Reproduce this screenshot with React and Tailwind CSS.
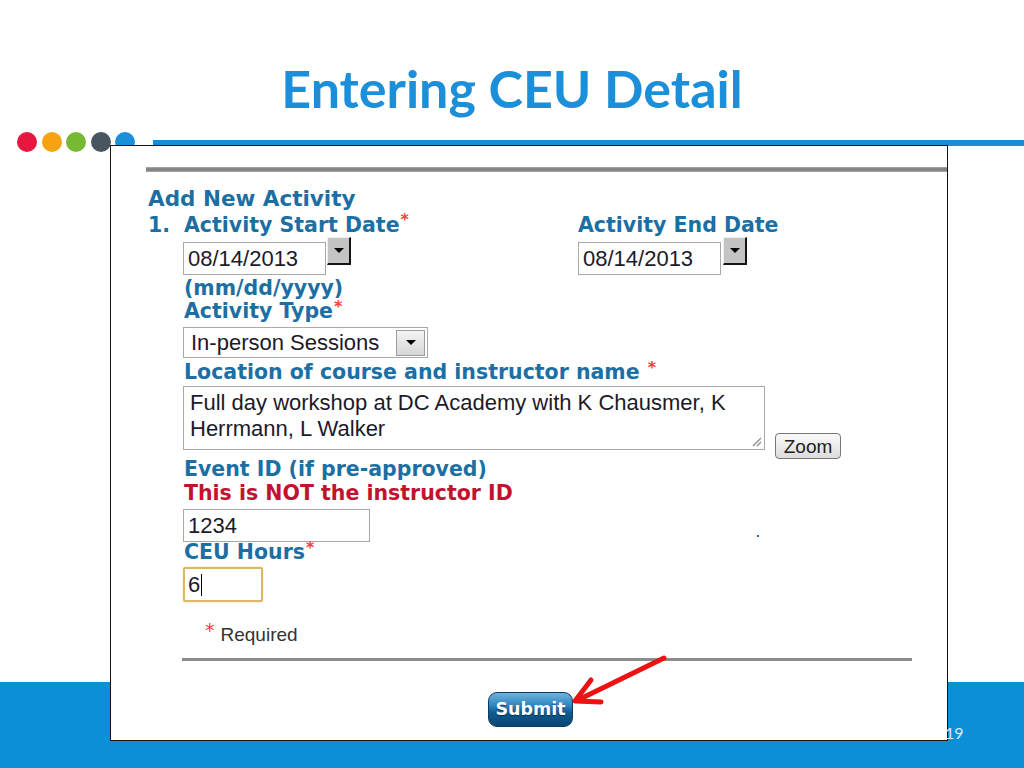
import React from "react";

const Star = () => (
  <span className="relative top-[-2px] ml-[1px] align-top text-[16px] leading-none text-[#ff3b3b]">*</span>
);

const Label = ({ children, req, className = "" }) => (
  <div className={`font-['DejaVu_Sans',Verdana,sans-serif] font-bold text-[20.5px] leading-[21px] text-[#1d6fa3] whitespace-nowrap ${className}`}>
    {children}
    {req && <Star />}
  </div>
);

const DateButton = () => (
  <div className="flex h-[28px] w-[24px] justify-center border-l border-t border-l-[#eeeeee] border-t-[#eeeeee] border-r-2 border-b-2 border-r-[#151515] border-b-[#151515] bg-[#c4c4c4] pt-[10px]">
    <svg width="10" height="5" viewBox="0 0 10 5">
      <path d="M0 0H10L5 5Z" fill="#000" />
    </svg>
  </div>
);

const TextBox = ({ children, className = "" }) => (
  <div className={`flex items-center border border-[#a8a8a8] pl-[4px] font-['Liberation_Sans',Arial,sans-serif] text-[22px] leading-none text-[#1c1a2a] ${className}`}>
    {children}
  </div>
);

export default function App() {
  return (
    <div className="relative h-[768px] w-[1024px] overflow-hidden bg-[linear-gradient(to_bottom,#ffffff_682px,#0b8fd7_682px)] font-['Lato',sans-serif]">
      {/* Title */}
      <div className="h-[132px] pt-[62px] text-center">
        <h1 className="text-[52px] font-bold leading-[52px] text-[#1b8fd9]">Entering CEU Detail</h1>
      </div>

      {/* Dots and rule */}
      <div className="flex h-[20px] items-start">
        <div className="ml-[17px] flex gap-[4.5px]">
          <div className="h-5 w-5 rounded-full bg-[#e8173f]" />
          <div className="h-5 w-5 rounded-full bg-[#f5a312]" />
          <div className="h-5 w-5 rounded-full bg-[#78b933]" />
          <div className="h-5 w-5 rounded-full bg-[#465560]" />
          <div className="h-5 w-5 rounded-full bg-[#1b8fd9]" />
        </div>
        <div className="ml-[18px] mt-[8px] h-[6px] flex-1 bg-[#1b8bd3]" />
      </div>

      {/* Screenshot box */}
      <div className="relative z-10 ml-[110px] mt-[-7px] h-[596px] w-[838px] border border-[#161616] bg-white">
        <div className="ml-[35px] mt-[21px] h-[5px] bg-[linear-gradient(to_bottom,#b0b0b0,#858585_30%,#858585_70%,#b0b0b0)]" />

        <div className="ml-[37px]">
          <div className="mt-[15px] font-['DejaVu_Sans',Verdana,sans-serif] text-[21.5px] font-bold leading-[24px] text-[#1d6fa3]">
            Add New Activity
          </div>

          <div className="mt-[3px] flex">
            <div className="w-[36px] font-['DejaVu_Sans',Verdana,sans-serif] text-[20.5px] font-bold leading-[23px] text-[#1d6fa3]">1.</div>

            <div className="flex flex-col">
              {/* Dates */}
              <div className="flex">
                <div className="w-[394px]">
                  <Label className="leading-[23px]" req>Activity Start Date</Label>
                  <div className="-ml-[1px] flex items-start">
                    <TextBox className="mt-[5px] h-[33px] w-[143px]">08/14/2013</TextBox>
                    <div className="ml-[1px]"><DateButton /></div>
                  </div>
                </div>
                <div>
                  <Label className="leading-[23px]">Activity End Date</Label>
                  <div className="flex items-start">
                    <TextBox className="mt-[5px] h-[33px] w-[143px]">08/14/2013</TextBox>
                    <div className="ml-[2px]"><DateButton /></div>
                  </div>
                </div>
              </div>

              <Label className="mt-[3px]">(mm/dd/yyyy)</Label>
              <Label className="mt-[2px]" req>Activity Type</Label>

              {/* Select */}
              <div className="-ml-[1px] mt-[5px] flex h-[31px] w-[245px] items-center border border-[#a8a8a8] pl-[7px] pr-[2px] font-['Liberation_Sans',Arial,sans-serif] text-[22px] leading-none text-[#1c1a2a]">
                <span className="flex-1">In-person Sessions</span>
                <div className="flex h-[26px] w-[29px] items-center justify-center border border-[#9c9c9c] bg-[linear-gradient(to_bottom,#f4f4f4,#d6d6d6)]">
                  <svg width="10" height="5" viewBox="0 0 10 5">
                    <path d="M0 0H10L5 5Z" fill="#000" />
                  </svg>
                </div>
              </div>

              <Label className="mt-[4px]">
                Location of course and instructor name <Star />
              </Label>

              {/* Textarea + Zoom */}
              <div className="-ml-[1px] mt-[3px] flex items-end">
                <div className="relative h-[64px] w-[582px] border border-[#a8a8a8] pl-[6px] pt-[3px] font-['Liberation_Sans',Arial,sans-serif] text-[22px] leading-[26px] text-[#1c1a2a]">
                  <div>Full day workshop at DC Academy with K Chausmer, K</div>
                  <div>Herrmann, L Walker</div>
                  <svg className="absolute bottom-[2px] right-[2px]" width="11" height="11" viewBox="0 0 11 11">
                    <path d="M2 10L10 2M6 10L10 6" stroke="#8a8a8a" strokeWidth="1.2" />
                  </svg>
                </div>
                <div className="-mb-[9px] ml-[10px] flex h-[26px] w-[66px] items-center justify-center rounded-[4px] border border-[#777] bg-[linear-gradient(to_bottom,#fafafa,#dcdcdc)] font-['Liberation_Sans',Arial,sans-serif] text-[19px] leading-none text-[#222]">
                  Zoom
                </div>
              </div>

              <Label className="mt-[9px]">Event ID (if pre-approved)</Label>
              <Label className="mt-[3px] text-[#c3122f]">This is NOT the instructor ID</Label>

              <TextBox className="-ml-[1px] mt-[5px] h-[33px] w-[187px]">1234</TextBox>

              <Label req>CEU Hours</Label>

              <div className="-ml-[1px] mt-[4px] flex h-[35px] w-[80px] items-center rounded-[2px] border-2 border-[#dcb56e] pl-[3px] font-['Liberation_Sans',Arial,sans-serif] text-[22px] leading-none text-[#1c1a2a] shadow-[0_0_2px_#f0d8a0]">
                6<span className="ml-[1px] inline-block h-[22px] w-[1px] bg-black" />
              </div>

              <div className="ml-[21px] mt-[22px] flex font-['Liberation_Sans',Arial,sans-serif] text-[19px] leading-[22px] text-[#333]">
                <span className="relative top-[-3px] mr-[6px] font-['DejaVu_Sans',sans-serif] text-[19px] leading-none text-[#ff3b3b]">*</span>
                Required
              </div>

              <div className="-ml-[2px] mt-[12px] h-[3px] w-[730px] bg-[#8c8c8c]" />

              <div className="ml-[304px] mt-[31px] flex h-[35px] w-[85px] items-center justify-center rounded-[9px] border border-[#0b3d63] bg-[linear-gradient(to_bottom,#6fb3de,#2a82bd_40%,#0f5a8e_60%,#0b4672)] font-['DejaVu_Sans',Verdana,sans-serif] text-[17.5px] font-bold leading-none text-white [text-shadow:0_1px_1px_#06304f]">
                Submit
              </div>
            </div>
          </div>
        </div>

        <div className="absolute left-[646px] top-[389px] h-[2px] w-[2px] bg-[#3060a0]" />
      </div>

      {/* Red arrow */}
      <svg className="absolute left-0 top-0 z-20" width="1024" height="768" viewBox="0 0 1024 768">
        <g stroke="#ee1111" strokeWidth="5" strokeLinecap="round" strokeLinejoin="round" fill="none">
          <path d="M664 658L578 700" />
          <path d="M591 680L575 701L601 702" />
        </g>
      </svg>

      <div className="absolute left-[945px] top-[724px] z-20 text-[16px] leading-[18px] text-[#dbe9f5]">19</div>
    </div>
  );
}
